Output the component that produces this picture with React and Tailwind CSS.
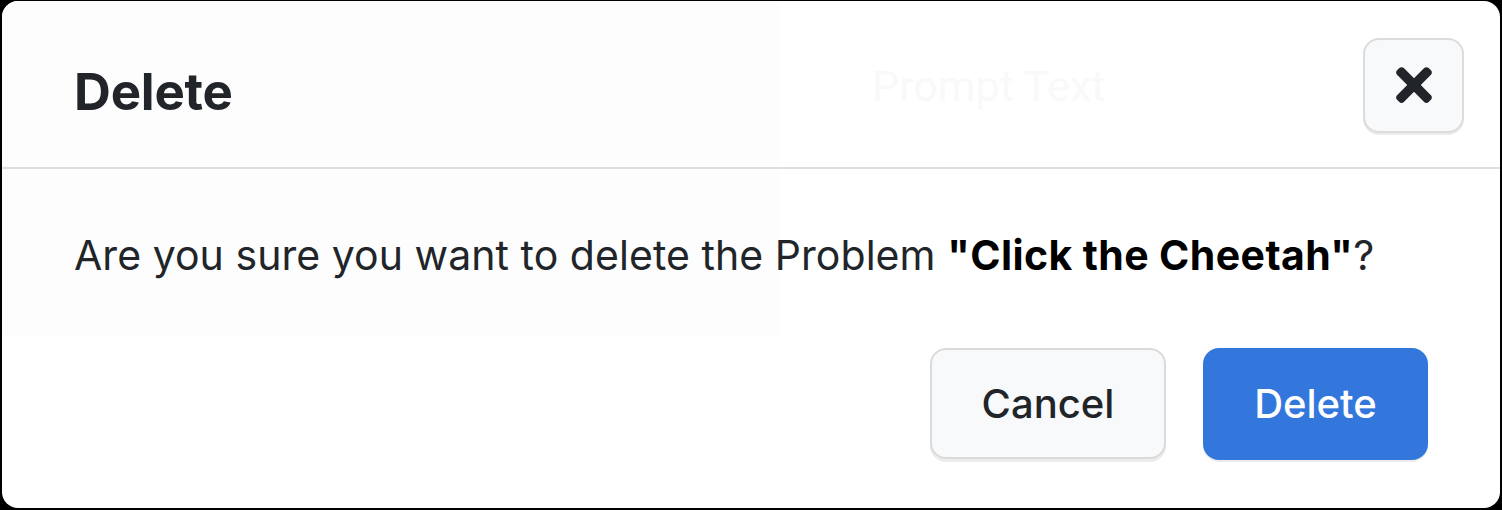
import React from "react";
import { FaTimes } from "react-icons/fa";

export default function App() {
  return (
    <div className="w-[1502px] h-[510px] bg-black pt-px px-[2px] pb-[2px]">
      <div
        className="relative h-full bg-white rounded-[16px] overflow-hidden flex flex-col text-[#212529]"
        style={{ fontFamily: "Inter, 'Noto Sans', sans-serif" }}
      >
        <div className="absolute left-0 top-0 w-[777px] h-[335px] bg-[#fdfdfd]" />
        <div className="absolute left-[870px] top-[64px] text-[43px] leading-none text-[#f9f9f9] select-none" style={{ fontFamily: "Roboto, sans-serif" }}>
          Prompt Text
        </div>

        <div className="relative h-[168px] shrink-0 flex items-center justify-between pl-[72px] pr-[36px] border-b-2 border-[#dedede]">
          <h5 className="text-[51px] font-bold leading-none mt-[14px] tracking-[-0.2px]">Delete</h5>
          <button className="w-[101px] h-[95px] rounded-[16px] border-2 border-[#dcdcdc] bg-[#f8f9fa] shadow-[0_2px_0_#ececec] flex items-center justify-center mt-[2px]">
            <FaTimes className="w-[52px] h-[52px] text-[#212529]" />
          </button>
        </div>

        <div className="relative pl-[72px] pt-[56px]">
          <p className="text-[41px] leading-[60px] tracking-[0.05px]">
            Are you sure you want to delete the Problem{" "}
            <span className="font-bold text-black tracking-[0.4px]">"Click the Cheetah"</span>?
          </p>
        </div>

        <div className="relative flex justify-end gap-[37px] pr-[72px] pt-[63px]">
          <button className="w-[236px] h-[111px] rounded-[16px] border-2 border-[#dadada] bg-[#f8f9fa] shadow-[0_3px_0_#ececec] text-[40px] font-medium text-[#212529] flex items-center justify-center">
            Cancel
          </button>
          <button className="w-[225px] h-[112px] rounded-[16px] bg-[#3377dd] shadow-[0_2px_0_#ececec] text-[40px] font-medium text-white flex items-center justify-center">
            Delete
          </button>
        </div>
      </div>
    </div>
  );
}
